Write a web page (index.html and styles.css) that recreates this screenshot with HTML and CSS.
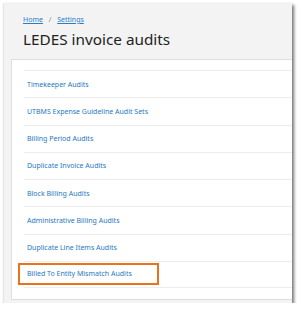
FILE: index.html
```html
<!DOCTYPE html>
<html lang="en">

<head>
    <meta charset="UTF-8">
    <meta name="viewport" content="width=device-width, initial-scale=1.0">
    <title>LEDES invoice audits</title>
    <link rel="stylesheet" href="styles.css">
</head>

<body>
    <!-- Screenshot frame -->
    <div class="shot">
        <!-- Page header -->
        <div class="page-head">
            <nav class="crumbs">
                <a href="#">Home</a>
                <span class="sep">/</span>
                <a href="#">Settings</a>
            </nav>
            <h1 class="page-title">LEDES invoice audits</h1>
        </div>

        <!-- Audit list -->
        <div class="card">
            <ul class="audit-list">
                <li><a href="#">Timekeeper Audits</a></li>
                <li><a href="#">UTBMS Expense Guideline Audit Sets</a></li>
                <li><a href="#">Billing Period Audits</a></li>
                <li><a href="#">Duplicate Invoice Audits</a></li>
                <li><a href="#">Block Billing Audits</a></li>
                <li><a href="#">Administrative Billing Audits</a></li>
                <li><a href="#">Duplicate Line Items Audits</a></li>
                <li><a href="#" class="highlight">Billed To Entity Mismatch Audits</a></li>
            </ul>
        </div>
    </div>
</body>

</html>
```

FILE: styles.css
```css
/* Global Styles */
body {
    margin: 0;
    background: #fff;
    font-family: "Noto Sans", "Open Sans", sans-serif;
}

/* Screenshot frame with drop shadow */
.shot {
    margin: 3px 0 0 3px;
    width: 289px;
    height: 300px;
    box-sizing: border-box;
    overflow: hidden;
    background: #f3f3f3;
    border-left: 1px solid #e6e6e6;
    border-top: 1px solid #f0f0f0;
    box-shadow: 2px 2px 3px rgba(0, 0, 0, 0.55);
}

/* Header */
.page-head {
    padding: 11px 0 0 19px;
    height: 55px;
    box-sizing: border-box;
}

.crumbs {
    font-size: 7px;
    line-height: 10px;
    color: #888;
}

.crumbs a {
    color: #2b7cc5;
    text-decoration: underline;
}

.crumbs .sep {
    margin: 0 4px;
}

.page-title {
    margin: 3px 0 0;
    font-size: 15.3px;
    line-height: 22px;
    font-weight: 400;
    color: #222;
}

/* Card */
.card {
    margin-left: 7px;
    height: 241px;
    box-sizing: border-box;
    background: #fff;
    border: 1px solid #dedede;
    border-right: none;
}

.audit-list {
    list-style: none;
    margin: 10px 0 0 12px;
    padding: 0;
}

.audit-list li {
    height: 27.25px;
    box-sizing: border-box;
    display: flex;
    align-items: center;
    padding-left: 3px;
    border-top: 1px solid #ececec;
    font-size: 7px;
}

.audit-list li:last-child {
    border-bottom: 1px solid #ececec;
}

.audit-list a {
    color: #2878c2;
    text-decoration: none;
}

.audit-list .highlight {
    display: inline-block;
    width: 141px;
    box-sizing: border-box;
    margin-left: -9px;
    padding: 4px 0 4px 7px;
    line-height: 10px;
    border: 2px solid #e8731c;
}
```
